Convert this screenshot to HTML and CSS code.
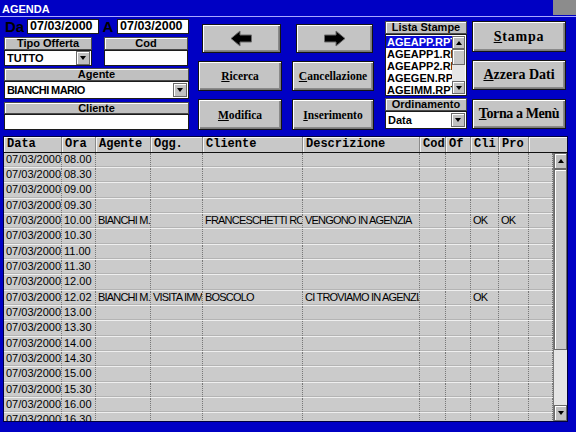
FILE: index.html
```html
<!DOCTYPE html>
<html>
<head>
<meta charset="utf-8">
<title>AGENDA</title>
<link rel="stylesheet" href="styles.css">
</head>
<body>
<div class="titlebar"><span class="title">AGENDA</span><span class="corner"></span></div>
<div class="top">
  <div class="filters">
    <div class="daterow">
      <span class="biglbl da">Da</span><div class="field date">07/03/2000</div>
      <span class="biglbl a">A</span><div class="field date">07/03/2000</div>
    </div>
    <div class="pair">
      <div class="group tipo">
        <div class="cap">Tipo Offerta</div>
        <div class="field combo h16"><span class="val">TUTTO</span><span class="ddbtn"><span class="tri-down"></span></span></div>
      </div>
      <div class="group cod">
        <div class="cap">Cod</div>
        <div class="field h16"></div>
      </div>
    </div>
    <div class="group agente">
      <div class="cap">Agente</div>
      <div class="field combo h18"><span class="val">BIANCHI MARIO</span><span class="ddbtn"><span class="tri-down"></span></span></div>
    </div>
    <div class="group cliente">
      <div class="cap cap12">Cliente</div>
      <div class="field h16"></div>
    </div>
  </div>

  <div class="actions">
    <div class="btn arrowbtn">
      <svg width="23" height="17" viewBox="0 0 23 17"><polygon points="1,8.5 10,1 10,5 21.5,5 21.5,12 10,12 10,16" fill="#000" stroke="#6a6a6a" stroke-width="1"/></svg>
    </div>
    <div class="btn arrowbtn">
      <svg width="23" height="17" viewBox="0 0 23 17"><polygon points="22,8.5 13,1 13,5 1.5,5 1.5,12 13,12 13,16" fill="#000" stroke="#6a6a6a" stroke-width="1"/></svg>
    </div>
    <div class="btn"><span><u>R</u>icerca</span></div>
    <div class="btn"><span><u>C</u>ancellazione</span></div>
    <div class="btn"><span><u>M</u>odifica</span></div>
    <div class="btn"><span><u>I</u>nserimento</span></div>
  </div>

  <div class="lists">
    <div class="cap">Lista Stampe</div>
    <div class="listbox">
      <div class="items">
        <div class="item sel">AGEAPP.RPT</div>
        <div class="item">AGEAPP1.RPT</div>
        <div class="item">AGEAPP2.RPT</div>
        <div class="item">AGEGEN.RPT</div>
        <div class="item">AGEIMM.RPT</div>
      </div>
      <div class="minivs">
        <span class="sbtn"><span class="tri-up"></span></span>
        <span class="minithumb"></span>
        <span class="minitrack"></span>
        <span class="sbtn"><span class="tri-down"></span></span>
      </div>
    </div>
    <div class="cap ord">Ordinamento</div>
    <div class="field combo h18"><span class="val">Data</span><span class="ddbtn"><span class="tri-down"></span></span></div>
  </div>

  <div class="cmds">
    <div class="btn big stampa"><span><u>S</u>tampa</span></div>
    <div class="btn big azzera"><span><u>A</u>zzera Dati</span></div>
    <div class="btn big torna"><span><u>T</u>orna a Menù</span></div>
  </div>
</div>

<div class="grid">
  <div class="hrow">
    <div class="hc">Data</div><div class="hc">Ora</div><div class="hc">Agente</div><div class="hc">Ogg.</div><div class="hc">Cliente</div><div class="hc">Descrizione</div><div class="hc">Cod</div><div class="hc">Of</div><div class="hc">Cli</div><div class="hc">Pro</div><div class="hc"></div>
  </div>
  <div class="body">
    <div class="rows">
      <div class="row"><div class="c">07/03/2000</div><div class="c">08.00</div><div class="c"></div><div class="c"></div><div class="c"></div><div class="c"></div><div class="c"></div><div class="c"></div><div class="c"></div><div class="c"></div><div class="c"></div></div>
      <div class="row"><div class="c">07/03/2000</div><div class="c">08.30</div><div class="c"></div><div class="c"></div><div class="c"></div><div class="c"></div><div class="c"></div><div class="c"></div><div class="c"></div><div class="c"></div><div class="c"></div></div>
      <div class="row"><div class="c">07/03/2000</div><div class="c">09.00</div><div class="c"></div><div class="c"></div><div class="c"></div><div class="c"></div><div class="c"></div><div class="c"></div><div class="c"></div><div class="c"></div><div class="c"></div></div>
      <div class="row"><div class="c">07/03/2000</div><div class="c">09.30</div><div class="c"></div><div class="c"></div><div class="c"></div><div class="c"></div><div class="c"></div><div class="c"></div><div class="c"></div><div class="c"></div><div class="c"></div></div>
      <div class="row"><div class="c">07/03/2000</div><div class="c">10.00</div><div class="c t">BIANCHI M.</div><div class="c"></div><div class="c t">FRANCESCHETTI ROBERTO</div><div class="c t">VENGONO IN AGENZIA</div><div class="c"></div><div class="c"></div><div class="c t">OK</div><div class="c t">OK</div><div class="c"></div></div>
      <div class="row"><div class="c">07/03/2000</div><div class="c">10.30</div><div class="c"></div><div class="c"></div><div class="c"></div><div class="c"></div><div class="c"></div><div class="c"></div><div class="c"></div><div class="c"></div><div class="c"></div></div>
      <div class="row"><div class="c">07/03/2000</div><div class="c">11.00</div><div class="c"></div><div class="c"></div><div class="c"></div><div class="c"></div><div class="c"></div><div class="c"></div><div class="c"></div><div class="c"></div><div class="c"></div></div>
      <div class="row"><div class="c">07/03/2000</div><div class="c">11.30</div><div class="c"></div><div class="c"></div><div class="c"></div><div class="c"></div><div class="c"></div><div class="c"></div><div class="c"></div><div class="c"></div><div class="c"></div></div>
      <div class="row"><div class="c">07/03/2000</div><div class="c">12.00</div><div class="c"></div><div class="c"></div><div class="c"></div><div class="c"></div><div class="c"></div><div class="c"></div><div class="c"></div><div class="c"></div><div class="c"></div></div>
      <div class="row"><div class="c">07/03/2000</div><div class="c">12.02</div><div class="c t">BIANCHI M.</div><div class="c t">VISITA IMMOBILE</div><div class="c t">BOSCOLO</div><div class="c t">CI TROVIAMO IN AGENZIA</div><div class="c"></div><div class="c"></div><div class="c t">OK</div><div class="c"></div><div class="c"></div></div>
      <div class="row"><div class="c">07/03/2000</div><div class="c">13.00</div><div class="c"></div><div class="c"></div><div class="c"></div><div class="c"></div><div class="c"></div><div class="c"></div><div class="c"></div><div class="c"></div><div class="c"></div></div>
      <div class="row"><div class="c">07/03/2000</div><div class="c">13.30</div><div class="c"></div><div class="c"></div><div class="c"></div><div class="c"></div><div class="c"></div><div class="c"></div><div class="c"></div><div class="c"></div><div class="c"></div></div>
      <div class="row"><div class="c">07/03/2000</div><div class="c">14.00</div><div class="c"></div><div class="c"></div><div class="c"></div><div class="c"></div><div class="c"></div><div class="c"></div><div class="c"></div><div class="c"></div><div class="c"></div></div>
      <div class="row"><div class="c">07/03/2000</div><div class="c">14.30</div><div class="c"></div><div class="c"></div><div class="c"></div><div class="c"></div><div class="c"></div><div class="c"></div><div class="c"></div><div class="c"></div><div class="c"></div></div>
      <div class="row"><div class="c">07/03/2000</div><div class="c">15.00</div><div class="c"></div><div class="c"></div><div class="c"></div><div class="c"></div><div class="c"></div><div class="c"></div><div class="c"></div><div class="c"></div><div class="c"></div></div>
      <div class="row"><div class="c">07/03/2000</div><div class="c">15.30</div><div class="c"></div><div class="c"></div><div class="c"></div><div class="c"></div><div class="c"></div><div class="c"></div><div class="c"></div><div class="c"></div><div class="c"></div></div>
      <div class="row"><div class="c">07/03/2000</div><div class="c">16.00</div><div class="c"></div><div class="c"></div><div class="c"></div><div class="c"></div><div class="c"></div><div class="c"></div><div class="c"></div><div class="c"></div><div class="c"></div></div>
      <div class="row"><div class="c">07/03/2000</div><div class="c">16.30</div><div class="c"></div><div class="c"></div><div class="c"></div><div class="c"></div><div class="c"></div><div class="c"></div><div class="c"></div><div class="c"></div><div class="c"></div></div>
    </div>
    <div class="vs">
      <span class="sbtn tall"><span class="tri-up"></span></span>
      <span class="thumb"></span>
      <span class="track"></span>
      <span class="sbtn tall"><span class="tri-down"></span></span>
    </div>
  </div>
</div>
</body>
</html>
```

FILE: styles.css
```css
* { box-sizing: border-box; }
html, body { margin: 0; padding: 0; }
body {
  background: #0000c4;
  width: 576px;
  height: 432px;
  overflow: hidden;
  font-family: "Liberation Sans", Arial, sans-serif;
  color: #000;
}

/* title */
.titlebar { display: flex; height: 17px; border-bottom: 1px solid #a8a8ff; }
.title { color: #fff; font-weight: bold; font-size: 11px; line-height: 12px; padding: 3px 0 0 2px; }
.corner { margin-left: auto; width: 23px; height: 15px; background: #8c8c8c; }

/* top area */
.top { display: flex; height: 119px; }

.filters { margin-left: 4px; width: 185px; }
.daterow { display: flex; align-items: center; margin-top: 2px; height: 15px; }
.biglbl { font-weight: bold; font-size: 15px; line-height: 15px; color: #000; }
.da { width: 23px; padding-left: 1px; }
.a { width: 18px; text-align: center; }

.field {
  background: #fff;
  border: 1px solid #1c1c1c;
  font-weight: bold;
  font-size: 11px;
}
.date { width: 72px; height: 15px; font-size: 12.5px; line-height: 13px; padding-left: 2px; }
.h16 { height: 16px; }
.h18 { height: 18px; }
.combo { display: flex; align-items: center; padding: 0 1px 0 2px; }
.combo .val { flex: 1; white-space: nowrap; overflow: hidden; }
.agente .val { letter-spacing: -0.6px; }
.ddbtn {
  width: 14px; height: 14px;
  background: #c0c0c0;
  border: 1px solid #6a6a6a;
  box-shadow: inset 1px 1px 0 #fff;
  display: flex; align-items: center; justify-content: center;
}

.cap {
  height: 13px;
  background: #c0c0c0;
  border: 1px solid #4a4a4a;
  box-shadow: inset 1px 1px 0 #fff;
  font-weight: bold;
  font-size: 11px;
  line-height: 11px;
  text-align: center;
  white-space: nowrap;
  overflow: hidden;
}
.cap12 { height: 12px; line-height: 10px; }

.pair { display: flex; margin-top: 3px; gap: 12px; }
.tipo { width: 88px; }
.cod { width: 84px; }
.agente { margin-top: 2px; }
.cliente { margin-top: 3px; }

/* triangles */
.tri-down { width: 0; height: 0; border-left: 3.5px solid transparent; border-right: 3.5px solid transparent; border-top: 4px solid #000; }
.tri-up { width: 0; height: 0; border-left: 3.5px solid transparent; border-right: 3.5px solid transparent; border-bottom: 4px solid #000; }

/* buttons */
.btn {
  background: #c4c4c4;
  border: 1px solid #141414;
  box-shadow: inset 1px 1px 0 #fff, inset -1px -1px 0 #7a7a7a, inset -2px -2px 0 #8a8a8a;
  display: flex; align-items: center; justify-content: center;
  font-family: "Liberation Serif", "Times New Roman", serif;
  font-weight: bold;
  font-size: 11.5px;
  color: #000;
  white-space: nowrap;
}
.actions {
  margin-left: 9px;
  padding-top: 7px;
  display: grid;
  grid-template-columns: 84px 82px;
  grid-template-rows: 29px 30px 31px;
  column-gap: 10px;
  row-gap: 8px;
  align-content: start;
}
.arrowbtn { margin-left: 4px; margin-right: 1px; }

.lists { margin-left: 11px; width: 82px; }
.lists > .cap:first-child { margin-top: 4px; }
.listbox {
  height: 62px;
  background: #fff;
  border: 1px solid #1c1c1c;
  display: flex;
}
.items { flex: 1; overflow: hidden; padding-top: 1px; }
.item { font-weight: bold; font-size: 11px; line-height: 12px; height: 12px; padding-left: 1px; white-space: nowrap; overflow: hidden; }
.item.sel { background: #0a0ad8; color: #fff; }
.minivs { width: 14px; display: flex; flex-direction: column; padding: 1px 1px 1px 0; }
.sbtn {
  height: 13px;
  background: #c0c0c0;
  border: 1px solid #6a6a6a;
  box-shadow: inset 1px 1px 0 #fff;
  display: flex; align-items: center; justify-content: center;
  flex: none;
}
.minithumb { height: 16px; background: #c8c8c8; border: 1px solid #6a6a6a; box-shadow: inset 1px 1px 0 #fff; flex: none; }
.minitrack { flex: 1; background: #e6e6e6; }
.ord { margin-top: 2px; }

.cmds { margin-left: 5px; width: 94px; }
.big { font-size: 14px; }
.stampa { margin-top: 4px; height: 31px; letter-spacing: 0.8px; }
.azzera { margin-top: 8px; height: 30px; }
.torna { margin-top: 9px; height: 30px; letter-spacing: -0.4px; }

/* grid */
.grid {
  margin-left: 3px;
  width: 565px;
  height: 286px;
  border: 1px solid #00003c;
  background: #cbcbcb;
  overflow: hidden;
}
.hrow, .row {
  display: grid;
  grid-template-columns: 58px 34px 55px 52px 100px 117px 26px 25px 28px 30px 24px;
}
.hrow {
  grid-template-columns: 58px 34px 55px 52px 100px 117px 26px 25px 28px 30px 38px;
  height: 16px;
  background: #c8c8c8;
  border-bottom: 1px solid #101010;
}
.hc {
  font-family: "Liberation Mono", "Courier New", monospace;
  font-weight: bold;
  font-size: 12px;
  line-height: 15px;
  padding-left: 3px;
  border-right: 1px solid #8a8a8a;
  box-shadow: inset 1px 1px 0 #f4f4f4;
  white-space: nowrap;
  overflow: hidden;
}
.hc:last-child { border-right: none; }

.body { display: flex; height: 268px; }
.rows { width: 549px; overflow: hidden; }
.row {
  height: 15px;
  border-bottom: 1px solid #efefef;
  box-shadow: inset 0 -1px 0 #b4b4b4;
}
.row:nth-child(3n) { height: 16px; }
.c {
  font-size: 11px;
  line-height: 13px;
  padding-left: 2px;
  border-right: 1px dotted #777;
  white-space: nowrap;
  overflow: hidden;
}
.c.t { letter-spacing: -0.8px; padding-left: 2px; }

.vs {
  width: 14px;
  display: flex;
  flex-direction: column;
  border-left: 1px solid #7a7a7a;
}
.sbtn.tall { height: 16px; }
.thumb { height: 181px; background: #c8c8c8; border: 1px solid #6a6a6a; box-shadow: inset 1px 1px 0 #fff; flex: none; }
.track { flex: 1; background: #e4e4e4; }
```
